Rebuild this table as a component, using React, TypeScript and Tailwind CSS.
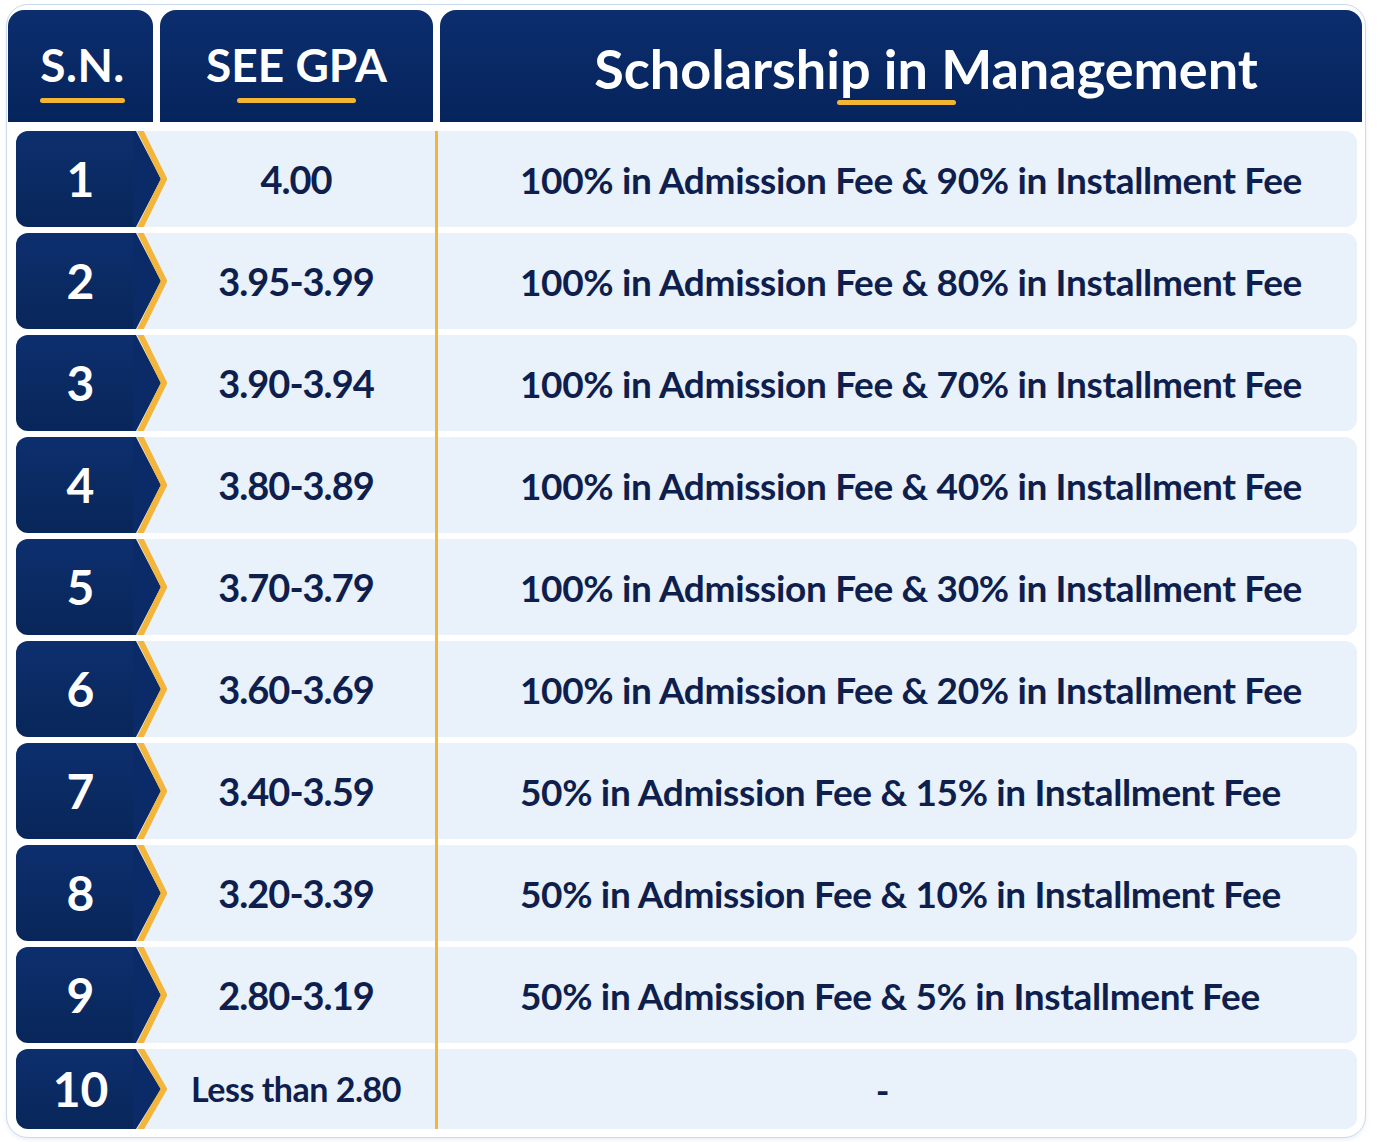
const rows = [
  { sn: "1", gpa: "4.00", text: "100% in Admission Fee & 90% in Installment Fee" },
  { sn: "2", gpa: "3.95-3.99", text: "100% in Admission Fee & 80% in Installment Fee" },
  { sn: "3", gpa: "3.90-3.94", text: "100% in Admission Fee & 70% in Installment Fee" },
  { sn: "4", gpa: "3.80-3.89", text: "100% in Admission Fee & 40% in Installment Fee" },
  { sn: "5", gpa: "3.70-3.79", text: "100% in Admission Fee & 30% in Installment Fee" },
  { sn: "6", gpa: "3.60-3.69", text: "100% in Admission Fee & 20% in Installment Fee" },
  { sn: "7", gpa: "3.40-3.59", text: "50% in Admission Fee & 15% in Installment Fee" },
  { sn: "8", gpa: "3.20-3.39", text: "50% in Admission Fee & 10% in Installment Fee" },
  { sn: "9", gpa: "2.80-3.19", text: "50% in Admission Fee & 5% in Installment Fee" },
  { sn: "10", gpa: "Less than 2.80", text: "-" },
];

function Chevron({ h }: { h: number }) {
  const m = h / 2;
  return (
    <svg width="34" height={h} viewBox={`0 0 34 ${h}`} className="shrink-0">
      <polygon points={`0,0 3,0 28,${m} 3,${h} 0,${h}`} fill="#0a2b68" />
      <polyline
        points={`6,-3 31,${m} 6,${h + 3}`}
        fill="none"
        stroke="#f3b63a"
        strokeWidth="6"
        strokeLinejoin="miter"
      />
    </svg>
  );
}

export default function App() {
  return (
    <div className="w-[1377px] h-[1142px] bg-white font-['Lato',sans-serif] pt-[4px] pl-[6px]">
      <div className="w-[1360px] h-[1134px] rounded-[22px] border border-[#cbd9ef] bg-white pt-[5px] pl-[1px] shadow-[0_2px_4px_rgba(120,150,200,0.15)]">
        {/* Header */}
        <div className="flex gap-[7px] h-[112px]">
          <div className="w-[145px] rounded-t-[16px] bg-gradient-to-b from-[#0c2e6e] to-[#06245c] flex flex-col items-center pt-[32px] pl-[4px]">
            <span className="text-white font-bold text-[46px] leading-[46px] tracking-[0.5px]">S.N.</span>
            <span className="mt-[10px] w-[85px] h-[5px] rounded-full bg-[#f2b633]" />
          </div>
          <div className="w-[273px] rounded-t-[16px] bg-gradient-to-b from-[#0c2e6e] to-[#06245c] flex flex-col items-center pt-[32px]">
            <span className="text-white font-bold text-[46px] leading-[46px]">SEE GPA</span>
            <span className="mt-[10px] w-[119px] h-[5px] rounded-full bg-[#f2b633]" />
          </div>
          <div className="w-[922px] rounded-t-[16px] bg-gradient-to-b from-[#0c2e6e] to-[#06245c] flex justify-center pt-[30px] pl-[50px]">
            <span className="text-white font-bold text-[54px] leading-[58px]">
              Scholarshi
              <span className="relative">
                p in
                <span className="absolute left-[-3px] right-[-28px] top-[64px] h-[5px] rounded-full bg-[#f2b633]" />
              </span>{" "}
              Management
            </span>
          </div>
        </div>

        {/* Body */}
        <div className="mt-[4px] pt-[5px] pl-[8px] pr-[8px]">
          {rows.map((r, i) => {
            const last = i === rows.length - 1;
            const h = last ? 80 : 96;
            return (
              <div key={r.sn} className={`flex ${last ? "h-[80px]" : "h-[102px]"}`}>
                <div className={`flex ${last ? "h-[80px]" : "h-[96px]"} bg-[#e9f1fb] rounded-l-[12px]`}>
                  <div className="w-[117px] rounded-l-[12px] bg-gradient-to-b from-[#0d2f6e] to-[#082659] flex items-center justify-center pl-[12px]">
                    <span className="text-white font-bold text-[48px] leading-none">{r.sn}</span>
                  </div>
                  <Chevron h={h} />
                  <div className="w-[268px] flex items-center justify-center pr-[10px]">
                    <span
                      className={`text-[#0f1f4d] font-bold leading-none ${
                        last ? "text-[34px] tracking-[-0.5px]" : "text-[38px] tracking-[-1px]"
                      }`}
                    >
                      {r.gpa}
                    </span>
                  </div>
                </div>
                <div className="w-[3px] self-stretch bg-[#f3b63a]" />
                <div
                  className={`flex-1 ${last ? "h-[80px] justify-center pr-[30px]" : "h-[96px] pl-[82px]"} bg-[#e9f1fb] rounded-r-[12px] flex items-center`}
                >
                  <span className="text-[#0f1f4d] font-bold text-[37px] leading-none tracking-[-0.35px]">
                    {r.text}
                  </span>
                </div>
              </div>
            );
          })}
        </div>
      </div>
    </div>
  );
}
